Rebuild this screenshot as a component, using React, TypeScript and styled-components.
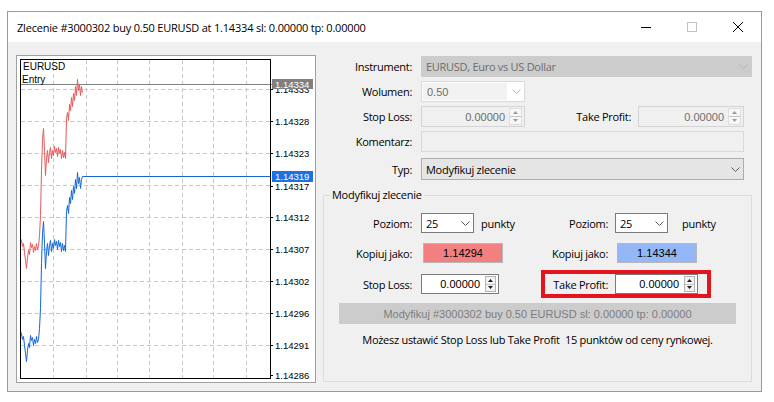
import React from "react";
import styled, { createGlobalStyle } from "styled-components";

const UI_FONT = `"Open Sans", "Noto Sans", sans-serif`;
const NUM_FONT = `"Liberation Sans", Arial, sans-serif`;

const GlobalStyle = createGlobalStyle`
  html, body { margin: 0; padding: 0; background: #ffffff; }
  body { font-family: ${UI_FONT}; font-size: 11px; letter-spacing: -0.28px; color: #000; }
  * { box-sizing: border-box; }
`;

const Page = styled.div`
  width: 774px;
  height: 402px;
  padding: 11px 0 0 7px;
  overflow: hidden;
`;

const Window = styled.div`
  width: 755px;
  height: 381px;
  border: 1px solid #6aa6d8;
  background: #f0f0f0;
  display: flex;
  flex-direction: column;
`;

const TitleBar = styled.div`
  height: 30px;
  flex: none;
  background: #ffffff;
  display: flex;
  align-items: center;
`;

const Title = styled.div`
  flex: 1;
  padding-left: 9px;
  font-size: 11px;
  letter-spacing: -0.2px;
  white-space: nowrap;
`;

const CaptionButton = styled.div`
  width: 46px;
  height: 30px;
  display: flex;
  align-items: center;
  justify-content: center;
  svg { display: block; }
`;

const Client = styled.div`
  flex: 1;
  display: flex;
  padding: 13px 9px 8px 8px;
`;

const ChartPanel = styled.div`
  width: 300px;
  height: 328px;
  flex: none;
  border: 1px solid #a0a0a0;
  background: #ffffff;
  letter-spacing: 0;
  svg { display: block; }
`;

const RightPane = styled.div`
  width: 429px;
  margin-left: 7px;
  flex: none;
  display: flex;
  flex-direction: column;
`;

const FormRow = styled.div<{ $top: number; $h?: number }>`
  display: flex;
  align-items: center;
  flex: none;
  height: ${(p) => p.$h ?? 21}px;
  margin-top: ${(p) => p.$top}px;
`;

const FieldLabel = styled.div<{ $w: number; $gap: number }>`
  width: ${(p) => p.$w}px;
  margin-right: ${(p) => p.$gap}px;
  flex: none;
  text-align: right;
  white-space: nowrap;
`;

type Tone = "disabled" | "readonly" | "select" | "white";

const toneBg: Record<Tone, string> = {
  disabled: "#cccccc",
  readonly: "#ffffff",
  select: "#e5e5e5",
  white: "#ffffff",
};
const toneBorder: Record<Tone, string> = {
  disabled: "#cccccc",
  readonly: "#d9d9d9",
  select: "#adadad",
  white: "#7a7a7a",
};
const toneColor: Record<Tone, string> = {
  disabled: "#6d6d6d",
  readonly: "#6d6d6d",
  select: "#000000",
  white: "#000000",
};

const ComboBox = styled.div<{ $w?: number; $tone: Tone }>`
  width: ${(p) => (p.$w ? `${p.$w}px` : "auto")};
  flex: ${(p) => (p.$w ? "none" : "1")};
  height: 100%;
  display: flex;
  align-items: stretch;
  border: 1px solid ${(p) => toneBorder[p.$tone]};
  background: ${(p) => toneBg[p.$tone]};
  color: ${(p) => toneColor[p.$tone]};
`;

const ComboText = styled.div<{ $fill?: boolean; $num?: boolean }>`
  flex: 1;
  display: flex;
  align-items: center;
  padding-left: 4px;
  margin: ${(p) => (p.$fill ? "1px" : "0")};
  background: ${(p) => (p.$fill ? "#f2f2f2" : "transparent")};
  font-family: ${(p) => (p.$num ? NUM_FONT : UI_FONT)};
  letter-spacing: ${(p) => (p.$num ? "0" : "-0.28px")};
  white-space: nowrap;
`;

const ChevronBox = styled.div`
  width: 16px;
  flex: none;
  display: flex;
  align-items: center;
  justify-content: center;
  svg { display: block; }
`;

const Chevron: React.FC<{ color: string }> = ({ color }) => (
  <ChevronBox>
    <svg width="9" height="5" viewBox="0 0 9 5">
      <polyline points="0.5,0.5 4.5,4.5 8.5,0.5" fill="none" stroke={color} strokeWidth="1" />
    </svg>
  </ChevronBox>
);

const EditBox = styled.div`
  flex: 1;
  height: 100%;
  border: 1px solid #d9d9d9;
  background: #f0f0f0;
`;

const SpinBox = styled.div<{ $w: number; $disabled?: boolean }>`
  width: ${(p) => p.$w}px;
  flex: none;
  height: 100%;
  display: flex;
  align-items: stretch;
  border: 1px solid ${(p) => (p.$disabled ? "#d4d4d4" : "#7a7a7a")};
  background: ${(p) => (p.$disabled ? "#f0f0f0" : "#ffffff")};
  color: ${(p) => (p.$disabled ? "#6d6d6d" : "#000000")};
  font-family: ${NUM_FONT};
  font-size: 11px;
  letter-spacing: 0;
`;

const SpinValue = styled.div<{ $pr: number }>`
  flex: 1;
  display: flex;
  align-items: center;
  justify-content: flex-end;
  padding-right: ${(p) => p.$pr}px;
`;

const SpinArrows = styled.div<{ $w: number; $disabled?: boolean }>`
  width: ${(p) => p.$w}px;
  flex: none;
  margin: 1px 2px 1px 0;
  display: flex;
  flex-direction: column;
  border: 1px solid ${(p) => (p.$disabled ? "#dedede" : "#b4b4b4")};
  background: ${(p) => (p.$disabled ? "#f7f7f7" : "#f3f3f3")};
`;

const ArrowCell = styled.div<{ $disabled?: boolean }>`
  flex: 1;
  display: flex;
  align-items: center;
  justify-content: center;
  svg { display: block; }
  & + & { border-top: 1px solid ${(p) => (p.$disabled ? "#e2e2e2" : "#c4c4c4")}; }
`;

const Spinner: React.FC<{ w: number; value: string; pr: number; aw: number; disabled?: boolean }> = ({
  w,
  value,
  pr,
  aw,
  disabled,
}) => {
  const c = disabled ? "#9a9a9a" : "#202020";
  return (
    <SpinBox $w={w} $disabled={disabled}>
      <SpinValue $pr={pr}>{value}</SpinValue>
      <SpinArrows $w={aw} $disabled={disabled}>
        <ArrowCell $disabled={disabled}>
          <svg width="5" height="3" viewBox="0 0 5 3">
            <polygon points="2.5,0 5,3 0,3" fill={c} />
          </svg>
        </ArrowCell>
        <ArrowCell $disabled={disabled}>
          <svg width="5" height="3" viewBox="0 0 5 3">
            <polygon points="0,0 5,0 2.5,3" fill={c} />
          </svg>
        </ArrowCell>
      </SpinArrows>
    </SpinBox>
  );
};

const GroupBox = styled.fieldset`
  margin: 7px 0 1px 0;
  padding: 0;
  min-width: 0;
  flex: 1;
  border: 1px solid #dcdcdc;
  display: flex;
  flex-direction: column;
`;

const GroupLegend = styled.legend`
  margin-left: 6px;
  padding: 0 2px;
  line-height: 16px;
  font-size: 11px;
`;

const GroupRow = styled.div<{ $top: number }>`
  display: flex;
  align-items: center;
  height: 20px;
  flex: none;
  margin-top: ${(p) => p.$top}px;
`;

const Half = styled.div<{ $w?: number }>`
  width: ${(p) => (p.$w ? `${p.$w}px` : "auto")};
  flex: ${(p) => (p.$w ? "none" : "1")};
  height: 100%;
  display: flex;
  align-items: center;
`;

const Unit = styled.div<{ $ml: number }>`
  margin-left: ${(p) => p.$ml}px;
`;

const CopyButton = styled.div<{ $bg: string; $ml: number }>`
  width: 80px;
  height: 20px;
  margin-left: ${(p) => p.$ml}px;
  flex: none;
  display: flex;
  align-items: center;
  justify-content: center;
  border: 1px solid #b8b8b8;
  background: ${(p) => p.$bg};
  font-family: ${NUM_FONT};
  font-size: 11px;
  letter-spacing: 0;
`;

const Highlight = styled.div`
  margin: -4px 0 -4px -4px;
  border: 4px solid #e3141c;
  padding-right: 9px;
  height: 28px;
  display: flex;
  align-items: center;
  flex: none;
`;

const WideButton = styled.div`
  margin: 9px 15px 0 15px;
  height: 21px;
  flex: none;
  display: flex;
  align-items: center;
  justify-content: center;
  background: #cccccc;
  color: #7d7d7d;
  font-family: ${NUM_FONT};
  font-size: 11px;
  letter-spacing: 0;
  white-space: nowrap;
`;

const Note = styled.div`
  margin-top: 8px;
  line-height: 16px;
  text-align: center;
  white-space: pre;
`;

const redPts: [number, number][] = [
  [20, 238], [21, 240], [22, 246], [23, 243], [24, 252], [25, 260], [26, 268], [27, 257], [28, 250],
  [29, 254], [30, 242], [31, 247], [32, 244], [33, 252], [34, 246], [35, 250], [36, 243], [37, 249],
  [38, 246], [39, 235], [40, 215], [41, 170], [42, 140], [43, 128], [44, 150], [45, 175], [46, 158],
  [47, 150], [48, 162], [49, 152], [50, 147], [51, 158], [52, 150], [53, 155], [54, 146], [55, 152],
  [56, 148], [57, 156], [58, 147], [59, 153], [60, 149], [61, 158], [62, 150], [63, 157], [64, 152],
  [65, 158], [66, 118], [67, 112], [68, 120], [69, 104], [70, 110], [71, 97], [72, 106], [73, 93],
  [74, 100], [75, 86], [76, 95], [77, 79], [78, 90], [79, 84], [80, 95], [81, 86], [82, 92],
];

const SPREAD = 93;
const bluePts: [number, number][] = [
  ...redPts.filter(([x]) => x <= 81).map(([x, y]) => [x, y + SPREAD] as [number, number]),
  [82, 176],
  [270, 176],
];

const toPoints = (pts: [number, number][]) => pts.map(([x, y]) => `${x + 0.5},${y + 0.5}`).join(" ");

const gridX = [53, 86, 117, 149, 182, 213, 246];
const gridY = [89, 121, 153, 185, 217, 249, 281, 313, 345];
const axisLabels: [string, number][] = [
  ["1.14328", 121],
  ["1.14323", 153],
  ["1.14317", 186],
  ["1.14312", 217],
  ["1.14307", 249],
  ["1.14302", 281],
  ["1.14296", 313],
  ["1.14291", 345],
  ["1.14286", 375],
];

const Chart: React.FC = () => (
  <svg width={298} height={326} viewBox="0 0 298 326">
    <defs>
      <clipPath id="hiddenLabel">
        <rect x={272} y={89} width={42} height={5} />
      </clipPath>
    </defs>
    <g transform="translate(-17 -56)" fontFamily='"Liberation Sans", Arial, sans-serif'>
      {gridX.map((x) => (
        <line key={`gx${x}`} x1={x + 0.5} y1={60} x2={x + 0.5} y2={378} stroke="#c8c8c8" strokeDasharray="4 3" />
      ))}
      {gridY.map((y) => (
        <line key={`gy${y}`} x1={21} y1={y + 0.5} x2={270} y2={y + 0.5} stroke="#c8c8c8" strokeDasharray="4 3" />
      ))}
      <line x1={20} y1={84.5} x2={272} y2={84.5} stroke="#808080" />
      <polyline points={toPoints(redPts)} fill="none" stroke="#e35b5b" strokeWidth={1} />
      <polyline points={toPoints(bluePts)} fill="none" stroke="#1565d8" strokeWidth={1} />
      <rect x={20.5} y={59.5} width={250} height={319} fill="none" stroke="#000" />
      <text x={23} y={70} fontSize={10}>EURUSD</text>
      <text x={22} y={83} fontSize={10}>Entry</text>
      <line x1={271} y1={89.5} x2={273} y2={89.5} stroke="#000" />
      <g clipPath="url(#hiddenLabel)">
        <text x={275} y={92.5} fontSize={9.5}>1.14333</text>
      </g>
      {axisLabels.map(([t, y]) => (
        <g key={t}>
          <line x1={271} y1={y + 0.5} x2={273} y2={y + 0.5} stroke="#000" />
          <text x={275} y={y + 3.5} fontSize={9.5}>
            {t}
          </text>
        </g>
      ))}
      <rect x={272} y={79} width={41} height={10} fill="#808080" />
      <text x={275} y={87.5} fontSize={9.5} fill="#fff">1.14334</text>
      <rect x={272} y={171} width={41} height={11} fill="#1c72e3" />
      <text x={275} y={180} fontSize={9.5} fill="#fff">1.14319</text>
    </g>
  </svg>
);

export default function App() {
  return (
    <>
      <GlobalStyle />
      <Page>
        <Window>
          <TitleBar>
            <Title>Zlecenie #3000302 buy 0.50 EURUSD at 1.14334 sl: 0.00000 tp: 0.00000</Title>
            <CaptionButton>
              <svg width="10" height="10" viewBox="0 0 10 10">
                <line x1="0" y1="5.5" x2="10" y2="5.5" stroke="#000" />
              </svg>
            </CaptionButton>
            <CaptionButton>
              <svg width="10" height="10" viewBox="0 0 10 10">
                <rect x="0.5" y="0.5" width="9" height="9" fill="none" stroke="#c4c4c4" />
              </svg>
            </CaptionButton>
            <CaptionButton>
              <svg width="10" height="10" viewBox="0 0 10 10">
                <path d="M0 0 L10 10 M10 0 L0 10" stroke="#000" strokeWidth="1" />
              </svg>
            </CaptionButton>
          </TitleBar>
          <Client>
            <ChartPanel>
              <Chart />
            </ChartPanel>
            <RightPane>
              <FormRow $top={1}>
                <FieldLabel $w={89} $gap={9}>Instrument:</FieldLabel>
                <ComboBox $tone="disabled">
                  <ComboText>EURUSD, Euro vs US Dollar</ComboText>
                  <Chevron color="#b4b4b4" />
                </ComboBox>
              </FormRow>
              <FormRow $top={4}>
                <FieldLabel $w={89} $gap={9}>Wolumen:</FieldLabel>
                <ComboBox $tone="readonly" $w={104}>
                  <ComboText $fill $num>0.50</ComboText>
                  <Chevron color="#b4b4b4" />
                </ComboBox>
              </FormRow>
              <FormRow $top={4}>
                <FieldLabel $w={89} $gap={9}>Stop Loss:</FieldLabel>
                <Spinner w={104} value="0.00000" pr={4} aw={13} disabled />
                <FieldLabel $w={106} $gap={7}>Take Profit:</FieldLabel>
                <Spinner w={106} value="0.00000" pr={4} aw={13} disabled />
              </FormRow>
              <FormRow $top={4}>
                <FieldLabel $w={89} $gap={9}>Komentarz:</FieldLabel>
                <EditBox />
                <div style={{ width: 8 }} />
              </FormRow>
              <FormRow $top={6} $h={22}>
                <FieldLabel $w={89} $gap={9}>Typ:</FieldLabel>
                <ComboBox $tone="select">
                  <ComboText>Modyfikuj zlecenie</ComboText>
                  <Chevron color="#5a5a5a" />
                </ComboBox>
                <div style={{ width: 8 }} />
              </FormRow>
              <GroupBox>
                <GroupLegend>Modyfikuj zlecenie</GroupLegend>
                <GroupRow $top={10}>
                  <Half $w={221}>
                    <FieldLabel $w={88} $gap={9}>Poziom:</FieldLabel>
                    <ComboBox $tone="white" $w={53}>
                      <ComboText>25</ComboText>
                      <Chevron color="#5a5a5a" />
                    </ComboBox>
                    <Unit $ml={7}>punkty</Unit>
                  </Half>
                  <Half>
                    <FieldLabel $w={63} $gap={7}>Poziom:</FieldLabel>
                    <ComboBox $tone="white" $w={53}>
                      <ComboText>25</ComboText>
                      <Chevron color="#5a5a5a" />
                    </ComboBox>
                    <Unit $ml={14}>punkty</Unit>
                  </Half>
                </GroupRow>
                <GroupRow $top={10}>
                  <Half $w={221}>
                    <FieldLabel $w={88} $gap={0}>Kopiuj jako:</FieldLabel>
                    <CopyButton $bg="#f38080" $ml={11}>1.14294</CopyButton>
                  </Half>
                  <Half>
                    <FieldLabel $w={63} $gap={0}>Kopiuj jako:</FieldLabel>
                    <CopyButton $bg="#94b7f7" $ml={9}>1.14344</CopyButton>
                  </Half>
                </GroupRow>
                <GroupRow $top={11}>
                  <Half $w={221}>
                    <FieldLabel $w={88} $gap={9}>Stop Loss:</FieldLabel>
                    <Spinner w={78} value="0.00000" pr={5} aw={11} />
                  </Half>
                  <Half>
                    <Highlight>
                      <FieldLabel $w={63} $gap={7}>Take Profit:</FieldLabel>
                      <Spinner w={83} value="0.00000" pr={5} aw={11} />
                    </Highlight>
                  </Half>
                </GroupRow>
                <WideButton>Modyfikuj #3000302 buy 0.50 EURUSD sl: 0.00000 tp: 0.00000</WideButton>
                <Note>Możesz ustawić Stop Loss lub Take Profit  15 punktów od ceny rynkowej.</Note>
              </GroupBox>
            </RightPane>
          </Client>
        </Window>
      </Page>
    </>
  );
}
